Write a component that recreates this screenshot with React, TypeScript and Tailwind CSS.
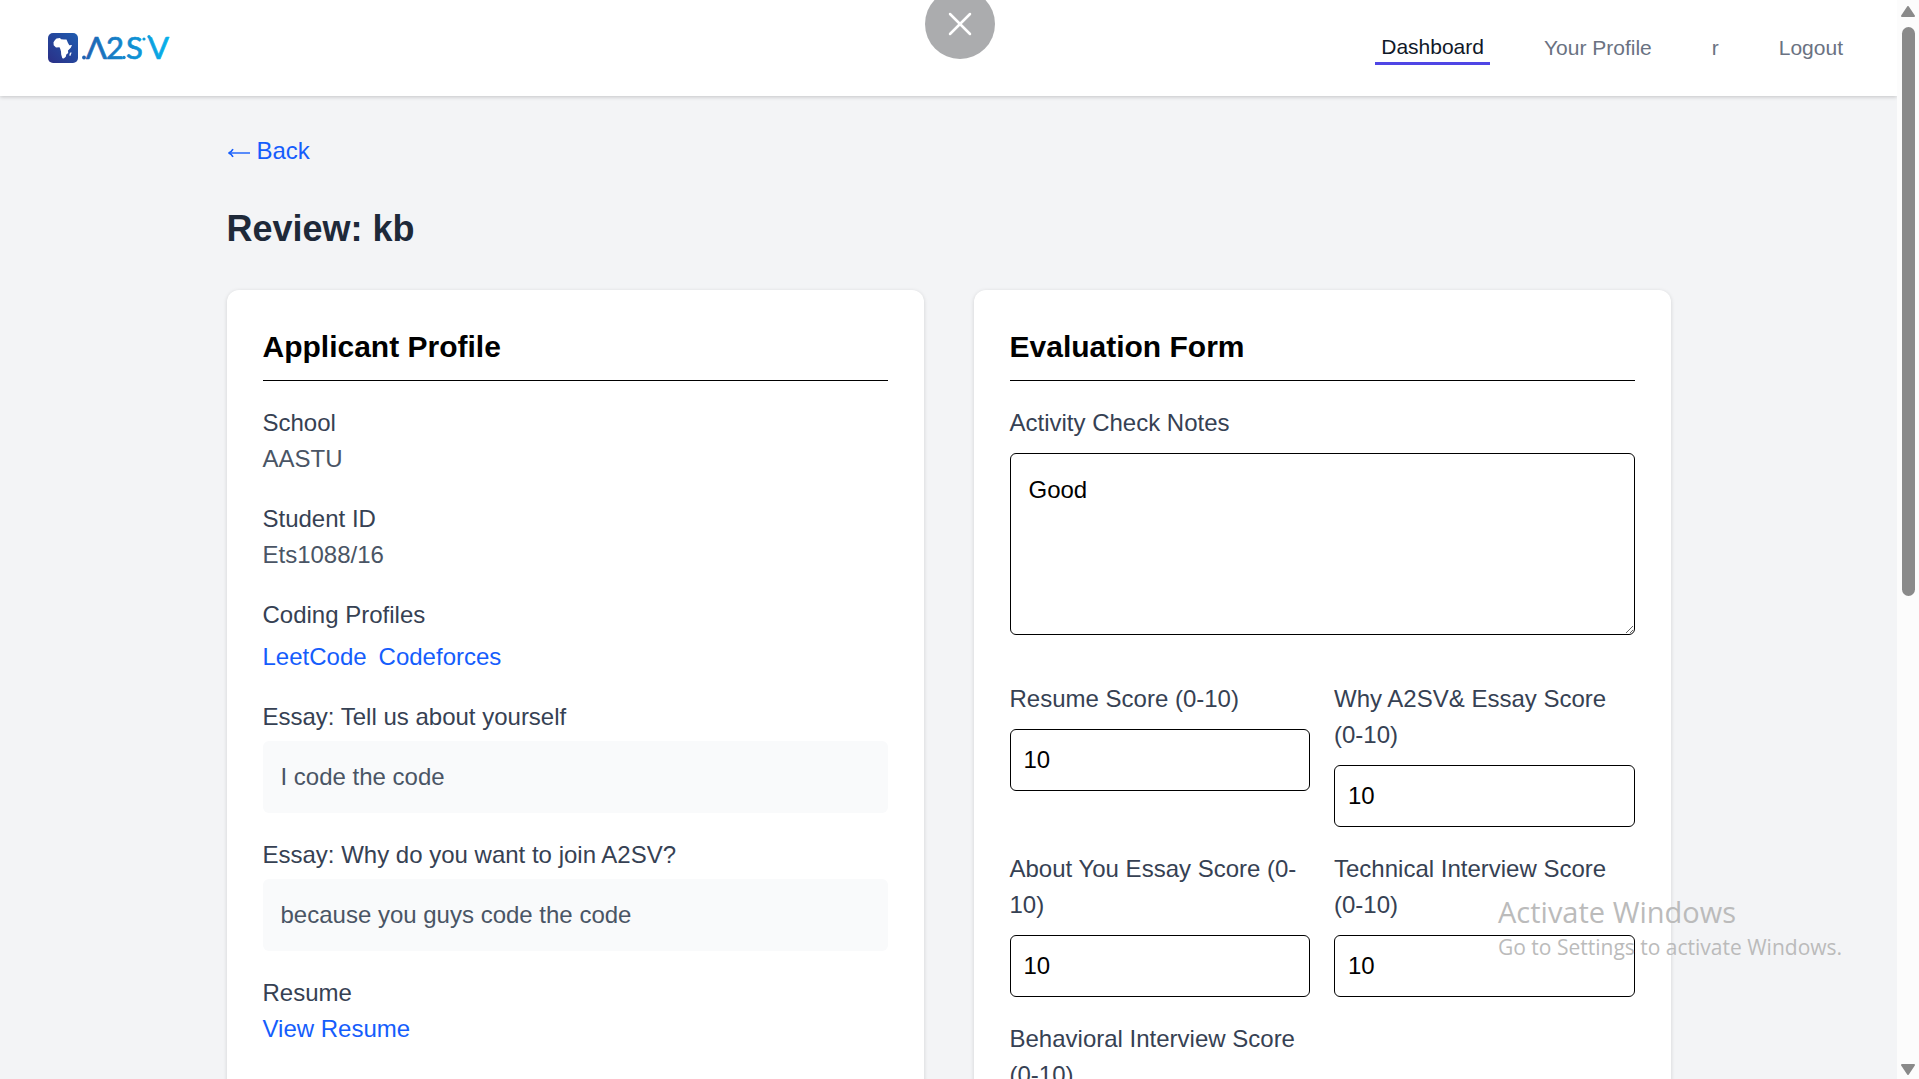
import type { ReactNode } from "react";
import { X } from "lucide-react";

function Logo() {
  return (
    <svg
      width="126"
      height="48"
      viewBox="0 -8 126 48"
      role="img"
      aria-label="A2SV"
    >
      <defs>
        <linearGradient id="badge" x1="0" y1="1" x2="1" y2="0">
          <stop offset="0" stopColor="#2b2f86" />
          <stop offset="1" stopColor="#1f5cb0" />
        </linearGradient>
        <linearGradient
          id="word"
          gradientUnits="userSpaceOnUse"
          x1="34"
          y1="0"
          x2="120"
          y2="0"
        >
          <stop offset="0" stopColor="#1f5fb0" />
          <stop offset="1" stopColor="#06b0ea" />
        </linearGradient>
      </defs>
      <rect x="0" y="1" width="30" height="30" rx="5" fill="url(#badge)" />
      <path
        d="M8.500 6.500L12 6L13 7.200L16 7.500L18.500 7.600L20 11L21.300 13.200L24 13L22.800 15.800L20 18.500L20.200 21L18.300 22.500L17.800 24.800L15.800 26.500L14.300 26.300L13.200 22.500L13 19.500L12.300 17L11.500 15.300L8 15.500L5.700 13.300L5.500 10.300L7 8Z"
        fill="#fff"
      />
      <path d="M22.800 20.200L23.600 20.800L22.300 24L21.400 23.600L21.600 21.800Z" fill="#fff" />
      <g fill="url(#word)">
        <circle cx="36" cy="25.500" r="1.900" />
        <circle cx="76" cy="25.500" r="1.700" />
        <circle cx="96" cy="7" r="1.600" />
        <circle cx="101" cy="4.500" r="1.600" />
        <text
          y="27"
          fontFamily='Lato, "Liberation Sans", sans-serif'
          fontSize="31"
          stroke="url(#word)"
          strokeWidth="0.7"
          strokeLinejoin="round"
        >
          <tspan x="38">Λ</tspan>
          <tspan x="58">2</tspan>
          <tspan x="78">S</tspan>
          <tspan x="100">V</tspan>
        </text>
      </g>
    </svg>
  );
}

function NavLink({ children, active }: { children: ReactNode; active?: boolean }) {
  return (
    <a
      href="#"
      className={
        active
          ? "border-b-3 border-[#4f46e5] px-1.5 text-gray-900"
          : "px-1.5 text-gray-500"
      }
    >
      {children}
    </a>
  );
}

function Header() {
  return (
    <header className="flex h-24 shrink-0 items-center justify-between bg-white px-12 shadow-[0_1px_4px_rgba(0,0,0,0.2)]">
      <a href="#">
        <Logo />
      </a>
      <nav className="flex items-center gap-12 text-[21px] leading-[30px]">
        <NavLink active>Dashboard</NavLink>
        <NavLink>Your Profile</NavLink>
        <NavLink>r</NavLink>
        <button type="button" className="px-1.5 text-gray-500">
          Logout
        </button>
      </nav>
    </header>
  );
}

function Card({ title, children }: { title: string; children: ReactNode }) {
  return (
    <section className="rounded-xl bg-white p-9 shadow-[0_1px_4px_rgba(0,0,0,0.14)]">
      <h2 className="mb-6 border-b border-black pb-3 text-[30px] leading-[42px] font-bold text-black">
        {title}
      </h2>
      <div className="flex flex-col gap-6">{children}</div>
    </section>
  );
}

function Field({ label, children }: { label: string; children: ReactNode }) {
  return (
    <div>
      <h3 className="text-gray-700">{label}</h3>
      {children}
    </div>
  );
}

function Essay({ children }: { children: ReactNode }) {
  return (
    <p className="mt-1.5 rounded-md bg-gray-50 p-[18px] text-gray-600">{children}</p>
  );
}

function Score({ id, label }: { id: string; label: string }) {
  return (
    <div>
      <label htmlFor={id} className="block text-gray-700">
        {label}
      </label>
      <input
        id={id}
        type="number"
        min={0}
        max={10}
        defaultValue={10}
        className="mt-3 block h-[62px] w-full rounded-md border border-black px-[13px] text-black"
      />
    </div>
  );
}

function Scrollbar() {
  return (
    <div
      aria-hidden="true"
      className="flex w-[22px] shrink-0 flex-col items-center bg-[#fcfcfc] pt-1.5 pb-1"
    >
      <svg width="14" height="11" viewBox="0 0 14 11">
        <path d="M7 1L13 10H1Z" fill="#8a8a8a" stroke="#8a8a8a" strokeWidth="2" strokeLinejoin="round" />
      </svg>
      <div className="my-2.5 flex w-full flex-1 flex-col items-center">
        <div className="h-[569px] w-[13px] rounded-full bg-[#8a8a8a]" />
      </div>
      <svg width="14" height="11" viewBox="0 0 14 11">
        <path d="M1 1H13L7 10Z" fill="#8a8a8a" stroke="#8a8a8a" strokeWidth="2" strokeLinejoin="round" />
      </svg>
    </div>
  );
}

export default function App() {
  return (
    <div className="relative flex h-screen overflow-hidden bg-gray-100 font-['Liberation_Sans',Arial,sans-serif] text-2xl leading-9">
      <div className="flex min-w-0 flex-1 flex-col overflow-hidden">
        <Header />
        <main className="mx-auto w-full max-w-[1444px] pt-[37px]">
          <a href="#" className="flex w-fit items-center gap-1.5 text-blue-600">
            <svg width="24" height="10" viewBox="0 0 24 10" className="mt-1" fill="none" aria-hidden="true">
              <path d="M2 5H23" stroke="currentColor" strokeWidth="1.400" />
              <path d="M6 1.200C5 3.200 3.500 4.500 1.500 5C3.500 5.500 5 6.800 6 8.800" stroke="currentColor" strokeWidth="1.600" />
            </svg>
            Back
          </a>
          <h1 className="mt-9 mb-[37px] text-4xl leading-[48px] font-bold text-gray-800">Review: kb</h1>
          <div className="grid grid-cols-2 gap-[50px]">
            <Card title="Applicant Profile">
              <Field label="School">
                <p className="text-gray-600">AASTU</p>
              </Field>
              <Field label="Student ID">
                <p className="text-gray-600">Ets1088/16</p>
              </Field>
              <Field label="Coding Profiles">
                <div className="mt-1.5 flex gap-3 text-blue-600">
                  <a href="#">LeetCode</a>
                  <a href="#">Codeforces</a>
                </div>
              </Field>
              <Field label="Essay: Tell us about yourself">
                <Essay>I code the code</Essay>
              </Field>
              <Field label="Essay: Why do you want to join A2SV?">
                <Essay>because you guys code the code</Essay>
              </Field>
              <Field label="Resume">
                <a href="#" className="text-blue-600">
                  View Resume
                </a>
              </Field>
            </Card>
            <Card title="Evaluation Form">
              <div className="pb-[22px]">
                <label htmlFor="notes" className="block text-gray-700">
                  Activity Check Notes
                </label>
                <textarea
                  id="notes"
                  rows={4}
                  defaultValue="Good"
                  className="mt-3 block w-full rounded-md border border-black p-[18px] text-black"
                />
              </div>
              <div className="grid grid-cols-2 gap-6">
                <Score id="resume" label="Resume Score (0-10)" />
                <Score id="why" label="Why A2SV& Essay Score (0-10)" />
                <Score id="about" label="About You Essay Score (0-10)" />
                <Score id="technical" label="Technical Interview Score (0-10)" />
                <Score id="behavioral" label="Behavioral Interview Score (0-10)" />
              </div>
            </Card>
          </div>
        </main>
      </div>
      <Scrollbar />

      <button
        type="button"
        aria-label="Close"
        className="absolute -top-[11px] left-1/2 flex size-[70px] -translate-x-1/2 items-center justify-center rounded-full bg-[#abacae] text-white"
      >
        <X size={40} strokeWidth={1.5} />
      </button>

      <div className="pointer-events-none absolute right-[78px] bottom-[115px] w-[343px] font-['Open_Sans','Noto_Sans',sans-serif] whitespace-nowrap text-[#bbbbbb]">
        <p className="text-[29px] leading-9">Activate Windows</p>
        <p className="text-[21px] leading-[34px]">Go to Settings to activate Windows.</p>
      </div>
    </div>
  );
}
